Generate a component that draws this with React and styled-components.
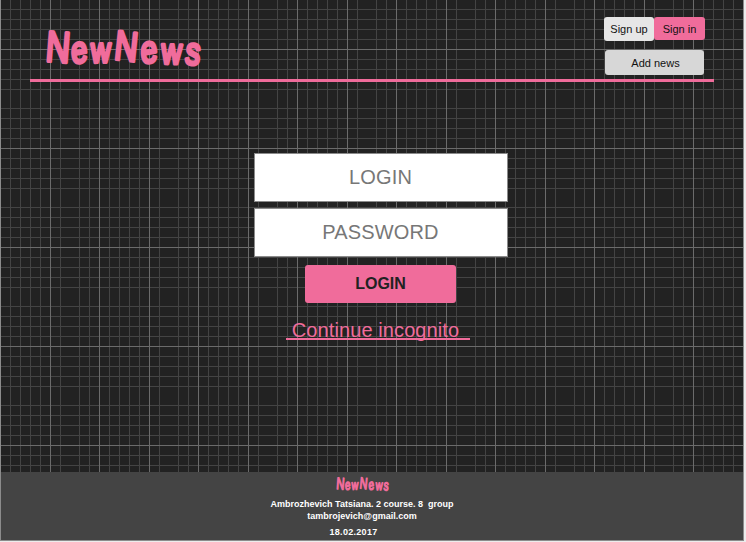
import React from 'react';
import styled, { createGlobalStyle, css } from 'styled-components';

const PINK = '#f06c9b';

const GlobalStyle = createGlobalStyle`
  *, *::before, *::after { box-sizing: border-box; }
  body {
    margin: 0;
    background: #ececec;
    font-family: "Liberation Sans", Arial, sans-serif;
  }
`;

const minor = '#444';
const major = '#6b6b6b';
const stops = (lines) =>
  lines.map(([p, c]) => `transparent ${p}px, ${c} ${p}px, ${c} ${p + 1}px, transparent ${p + 1}px`).join(', ');

const columns = stops([[0, major], [10, minor], [20, minor], [30, minor], [40, minor], [60, minor], [79, minor], [89, minor]]);
const rows = stops([[9, minor], [19, minor], [29, minor], [39, minor], [59, minor], [69, minor], [79, minor], [89, minor]]);

const Page = styled.div`
  width: 744px;
  height: 541px;
  display: flex;
  flex-direction: column;
  border: solid #8c8c8c;
  border-width: 0 1px 1px 1px;
  background-color: #222;
  background-origin: border-box;
  background-image:
    linear-gradient(to right, transparent 50px, ${major} 50px, ${major} 51px, transparent 51px),
    linear-gradient(to bottom, transparent 49px, ${major} 49px, ${major} 50px, transparent 50px),
    linear-gradient(to right, ${columns}),
    linear-gradient(to bottom, ${rows});
  background-size: 99px 100%, 100% 99px, 99px 100%, 100% 99px;
`;

const Header = styled.header`
  height: 82px;
  margin: 0 29px;
  padding: 17px 9px 0 15px;
  display: flex;
  justify-content: space-between;
  border-bottom: 3px solid ${PINK};
`;

const LogoSvg = styled.svg`
  display: block;
  flex: none;
  overflow: visible;
  width: ${(p) => p.$width}px;
  height: ${(p) => p.$height}px;
`;

const LogoText = styled.text`
  font-family: "Liberation Sans", Arial, sans-serif;
  font-weight: 400;
  fill: ${PINK};
  stroke: ${PINK};
  stroke-width: 3.5px;
  stroke-linejoin: round;
`;

const Actions = styled.div`
  width: 101px;
  display: flex;
  flex-wrap: wrap;
  align-content: flex-start;
  row-gap: 9px;
`;

const variants = {
  light: css`width: 50px; height: 24px; background: #e6e6e6;`,
  pink: css`width: 51px; height: 23px; background: ${PINK};`,
  wide: css`width: 99px; height: 25px; margin-left: 1px; padding-left: 2px; background: #d7d7d7;`,
  login: css`
    width: 151px;
    height: 38px;
    margin-top: 8px;
    background: ${PINK};
    color: #222;
    font-size: 16px;
    font-weight: 700;
  `,
};

const Button = styled.button`
  display: flex;
  align-items: center;
  justify-content: center;
  padding: 0;
  border: 0;
  border-radius: 3px;
  color: #111;
  font: 400 11px "Liberation Sans", Arial, sans-serif;
  white-space: nowrap;
  ${(p) => variants[p.$variant]}
`;

const Form = styled.main`
  flex: 1;
  width: 253px;
  margin-left: 253px;
  padding-top: 71px;
  display: flex;
  flex-direction: column;
  align-items: center;
`;

const Field = styled.input`
  width: 254px;
  height: 49px;
  margin-bottom: ${(p) => p.$gap || 0}px;
  padding: 0;
  border: 1px solid #8b8b8b;
  border-radius: 0;
  background: #fff;
  text-align: center;
  font: 400 20px "Liberation Sans", Arial, sans-serif;
  letter-spacing: 0.15px;
  outline: none;
  &::placeholder { color: #777; opacity: 1; }
`;

const Incognito = styled.a`
  width: 184px;
  height: 22px;
  margin-top: 15px;
  margin-right: 6px;
  border-bottom: 2px solid ${PINK};
  padding-right: 4px;
  color: ${PINK};
  font-size: 20px;
  letter-spacing: 0.1px;
  line-height: 25px;
  text-align: center;
  white-space: nowrap;
`;

const Footer = styled.footer`
  height: 68px;
  padding-top: 5px;
  background: #444;
  color: #fff;
  display: flex;
  flex-direction: column;
  align-items: center;
  padding-right: 20px;
`;

const FooterLine = styled.div`
  height: 12px;
  margin-top: ${(p) => p.$top || 0}px;
  margin-right: ${(p) => p.$shift || 0}px;
  font-size: 9px;
  font-weight: 700;
  line-height: 12px;
  letter-spacing: ${(p) => p.$track || 0}px;
  white-space: pre;
`;

const LETTERS = [
  { char: 'N', x: 0, y: 31.5, size: 43, turn: 3 },
  { char: 'e', x: 35, y: 34.5, size: 37, turn: -8 },
  { char: 'w', x: 59, y: 33, size: 35, turn: -1 },
  { char: 'N', x: 88, y: 29.5, size: 41, turn: 5 },
  { char: 'e', x: 124, y: 34.5, size: 38, turn: -8 },
  { char: 'w', x: 149, y: 34, size: 36, turn: 1 },
  { char: 's', x: 179, y: 34, size: 38, turn: 5 },
];

function Logo({ width, height }) {
  return (
    <LogoSvg $width={width} $height={height} viewBox="0 0 156 36" preserveAspectRatio="none" role="img">
      <LogoText transform="translate(1 -0.5) skewX(-2) scale(0.78 1)">
        {LETTERS.map((l, i) => (
          <tspan key={i} x={l.x} y={l.y} fontSize={l.size} rotate={l.turn}>{l.char}</tspan>
        ))}
      </LogoText>
    </LogoSvg>
  );
}

const LogoSlot = styled.div`
  padding-top: 13px;
`;

export default function App() {
  return (
    <>
      <GlobalStyle />
      <Page>
        <Header>
          <LogoSlot><Logo width={156} height={36} /></LogoSlot>
          <Actions>
            <Button $variant="light">Sign up</Button>
            <Button $variant="pink">Sign in</Button>
            <Button $variant="wide">Add news</Button>
          </Actions>
        </Header>
        <Form>
          <Field placeholder="LOGIN" $gap={6} />
          <Field placeholder="PASSWORD" type="text" />
          <Button $variant="login">LOGIN</Button>
          <Incognito>Continue incognito</Incognito>
        </Form>
        <Footer>
          <Logo width={53} height={14} />
          <FooterLine $top={7}>Ambrozhevich Tatsiana. 2 course. 8  group</FooterLine>
          <FooterLine>tambrojevich@gmail.com</FooterLine>
          <FooterLine $top={4} $shift={17} $track={0.3}>18.02.2017</FooterLine>
        </Footer>
      </Page>
    </>
  );
}
